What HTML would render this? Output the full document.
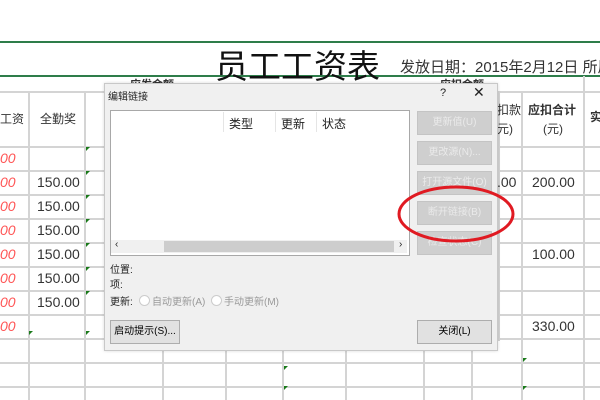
<!DOCTYPE html><html><head><meta charset="utf-8"><style>
html,body{margin:0;padding:0;width:600px;height:400px;overflow:hidden;background:#fff}
#w{position:relative;width:600px;height:400px;overflow:hidden;font-family:"Liberation Sans","Noto Sans CJK SC",sans-serif}
.a{position:absolute}
.h{position:absolute;left:0;width:600px;height:2px;background:#d4d4d4}
.v{position:absolute;width:2px;background:#d4d4d4}
.t{position:absolute;font-size:14px;color:#333;white-space:nowrap}
.r{position:absolute;font-size:14px;color:#f55;font-style:italic}
.g{position:absolute;width:0;height:0;border-top:4px solid #1a7a1a;border-right:4px solid transparent}
.btn{position:absolute;left:417px;width:73px;height:22px;background:#cfcfcf;border:1px solid #c4c4c4;color:#eaeaea;font-size:10px;text-align:center;line-height:22px;white-space:nowrap;overflow:hidden}
.sm{font-size:10px;color:#222;position:absolute;white-space:nowrap}
</style></head><body><div id="w">
<div class="a" style="left:0;top:41px;width:600px;height:2px;background:#2e7d4a"></div>
<div class="a" style="left:0;top:75px;width:600px;height:2px;background:#2e7d4a"></div>
<div class="t" style="left:215px;top:40px;font-size:33px;color:#111">员工工资表</div>
<div class="t" style="left:400px;top:56px;font-size:15px;width:200px;overflow:hidden">发放日期：2015年2月12日 所属日期</div>
<div class="t" style="left:130px;top:76px;font-size:11px;font-weight:bold">应发金额</div>
<div class="t" style="left:440px;top:76px;font-size:11px;font-weight:bold">应扣金额</div>
<div class="h" style="top:91px"></div>
<div class="h" style="top:146px"></div><div class="h" style="top:170px"></div><div class="h" style="top:194px"></div><div class="h" style="top:218px"></div><div class="h" style="top:242px"></div><div class="h" style="top:266px"></div><div class="h" style="top:290px"></div><div class="h" style="top:314px"></div><div class="h" style="top:338px"></div><div class="h" style="top:362px"></div><div class="h" style="top:386px"></div>
<div class="v" style="left:28px;top:91px;height:309px"></div><div class="v" style="left:84px;top:91px;height:309px"></div><div class="v" style="left:162px;top:340px;height:60px"></div><div class="v" style="left:225px;top:340px;height:60px"></div><div class="v" style="left:282px;top:340px;height:60px"></div><div class="v" style="left:345px;top:340px;height:60px"></div><div class="v" style="left:423px;top:340px;height:60px"></div><div class="v" style="left:471px;top:340px;height:60px"></div><div class="v" style="left:521px;top:91px;height:309px"></div><div class="v" style="left:583px;top:76px;height:324px"></div><div class="v" style="left:498px;top:91px;height:250px"></div>
<div class="t" style="left:0;top:110px;font-size:12px">工资</div>
<div class="t" style="left:40px;top:110px;font-size:12px">全勤奖</div>
<div class="t" style="left:497px;top:101px;font-size:12px">扣款</div><div class="t" style="left:497px;top:120px;font-size:12px">元)</div>
<div class="t" style="left:528px;top:101px;font-size:12px;font-weight:bold">应扣合计</div><div class="t" style="left:543px;top:120px;font-size:12px">(元)</div>
<div class="t" style="left:590px;top:108px;font-size:12px;font-weight:bold">实</div>
<div class="r" style="top:150px;left:0">00</div><div class="r" style="top:174px;left:0">00</div><div class="r" style="top:198px;left:0">00</div><div class="r" style="top:222px;left:0">00</div><div class="r" style="top:246px;left:0">00</div><div class="r" style="top:270px;left:0">00</div><div class="r" style="top:294px;left:0">00</div><div class="r" style="top:318px;left:0">00</div>
<div class="t" style="left:37px;top:174px">150.00</div><div class="t" style="left:37px;top:198px">150.00</div><div class="t" style="left:37px;top:222px">150.00</div><div class="t" style="left:37px;top:246px">150.00</div><div class="t" style="left:37px;top:270px">150.00</div><div class="t" style="left:37px;top:294px">150.00</div>
<div class="t" style="left:497px;top:174px">.00</div><div class="t" style="left:532px;top:174px">200.00</div><div class="t" style="left:532px;top:246px">100.00</div><div class="t" style="left:532px;top:318px">330.00</div>
<div class="g" style="left:86px;top:147px"></div><div class="g" style="left:86px;top:171px"></div><div class="g" style="left:86px;top:195px"></div><div class="g" style="left:86px;top:219px"></div><div class="g" style="left:86px;top:243px"></div><div class="g" style="left:86px;top:267px"></div><div class="g" style="left:86px;top:291px"></div><div class="g" style="left:29px;top:331px"></div><div class="g" style="left:86px;top:331px"></div><div class="g" style="left:523px;top:358px"></div><div class="g" style="left:523px;top:386px"></div><div class="g" style="left:284px;top:386px"></div><div class="g" style="left:284px;top:366px"></div>
<div class="a" style="left:104px;top:83px;width:392px;height:266px;background:#f0f0f0;border:1px solid #c8c8c8;box-shadow:0 0 3px rgba(0,0,0,.15)"></div>
<div class="sm" style="left:108px;top:88px">编辑链接</div>
<div class="sm" style="left:440px;top:87px;font-size:11px">?</div>
<div class="sm" style="left:473px;top:84px;font-size:14px">✕</div>
<div class="a" style="left:110px;top:110px;width:298px;height:144px;background:#fff;border:1px solid #a8a8a8"></div>
<div class="sm" style="left:229px;top:115px;font-size:12px">类型</div>
<div class="a" style="left:223px;top:112px;width:1px;height:20px;background:#e5e5e5"></div>
<div class="sm" style="left:281px;top:115px;font-size:12px">更新</div>
<div class="a" style="left:275px;top:112px;width:1px;height:20px;background:#e5e5e5"></div>
<div class="sm" style="left:322px;top:115px;font-size:12px">状态</div>
<div class="a" style="left:316px;top:112px;width:1px;height:20px;background:#e5e5e5"></div>
<div class="a" style="left:111px;top:240px;width:296px;height:13px;background:#f0f0f0"></div>
<div class="a" style="left:164px;top:241px;width:230px;height:11px;background:#cdcdcd"></div>
<div class="sm" style="left:115px;top:239px">‹</div><div class="sm" style="left:399px;top:239px">›</div>
<div class="btn" style="top:111px">更新值(U)</div>
<div class="btn" style="top:141px">更改源(N)...</div>
<div class="btn" style="top:171px">打开源文件(O)</div>
<div class="btn" style="top:201px">断开链接(B)</div>
<div class="btn" style="top:231px">检查状态(C)</div>
<div class="sm" style="left:110px;top:261px">位置:</div>
<div class="sm" style="left:110px;top:276px">项:</div>
<div class="sm" style="left:110px;top:293px">更新:</div>
<div class="a" style="left:139px;top:295px;width:9px;height:9px;border:1px solid #ccc;border-radius:50%;background:#fff"></div>
<div class="sm" style="left:152px;top:293px;color:#999">自动更新(A)</div>
<div class="a" style="left:211px;top:295px;width:9px;height:9px;border:1px solid #ccc;border-radius:50%;background:#fff"></div>
<div class="sm" style="left:224px;top:293px;color:#999">手动更新(M)</div>
<div class="a" style="left:110px;top:320px;width:68px;height:22px;background:#e1e1e1;border:1px solid #adadad;font-size:10px;line-height:22px;text-align:center;white-space:nowrap">启动提示(S)...</div>
<div class="a" style="left:417px;top:320px;width:73px;height:22px;background:#e1e1e1;border:1px solid #adadad;font-size:10px;line-height:22px;text-align:center">关闭(L)</div>
<svg class="a" style="left:0;top:0" width="600" height="400"><ellipse cx="456" cy="214" rx="57" ry="27" fill="none" stroke="#e01a22" stroke-width="3"/></svg>
</div></body></html>
